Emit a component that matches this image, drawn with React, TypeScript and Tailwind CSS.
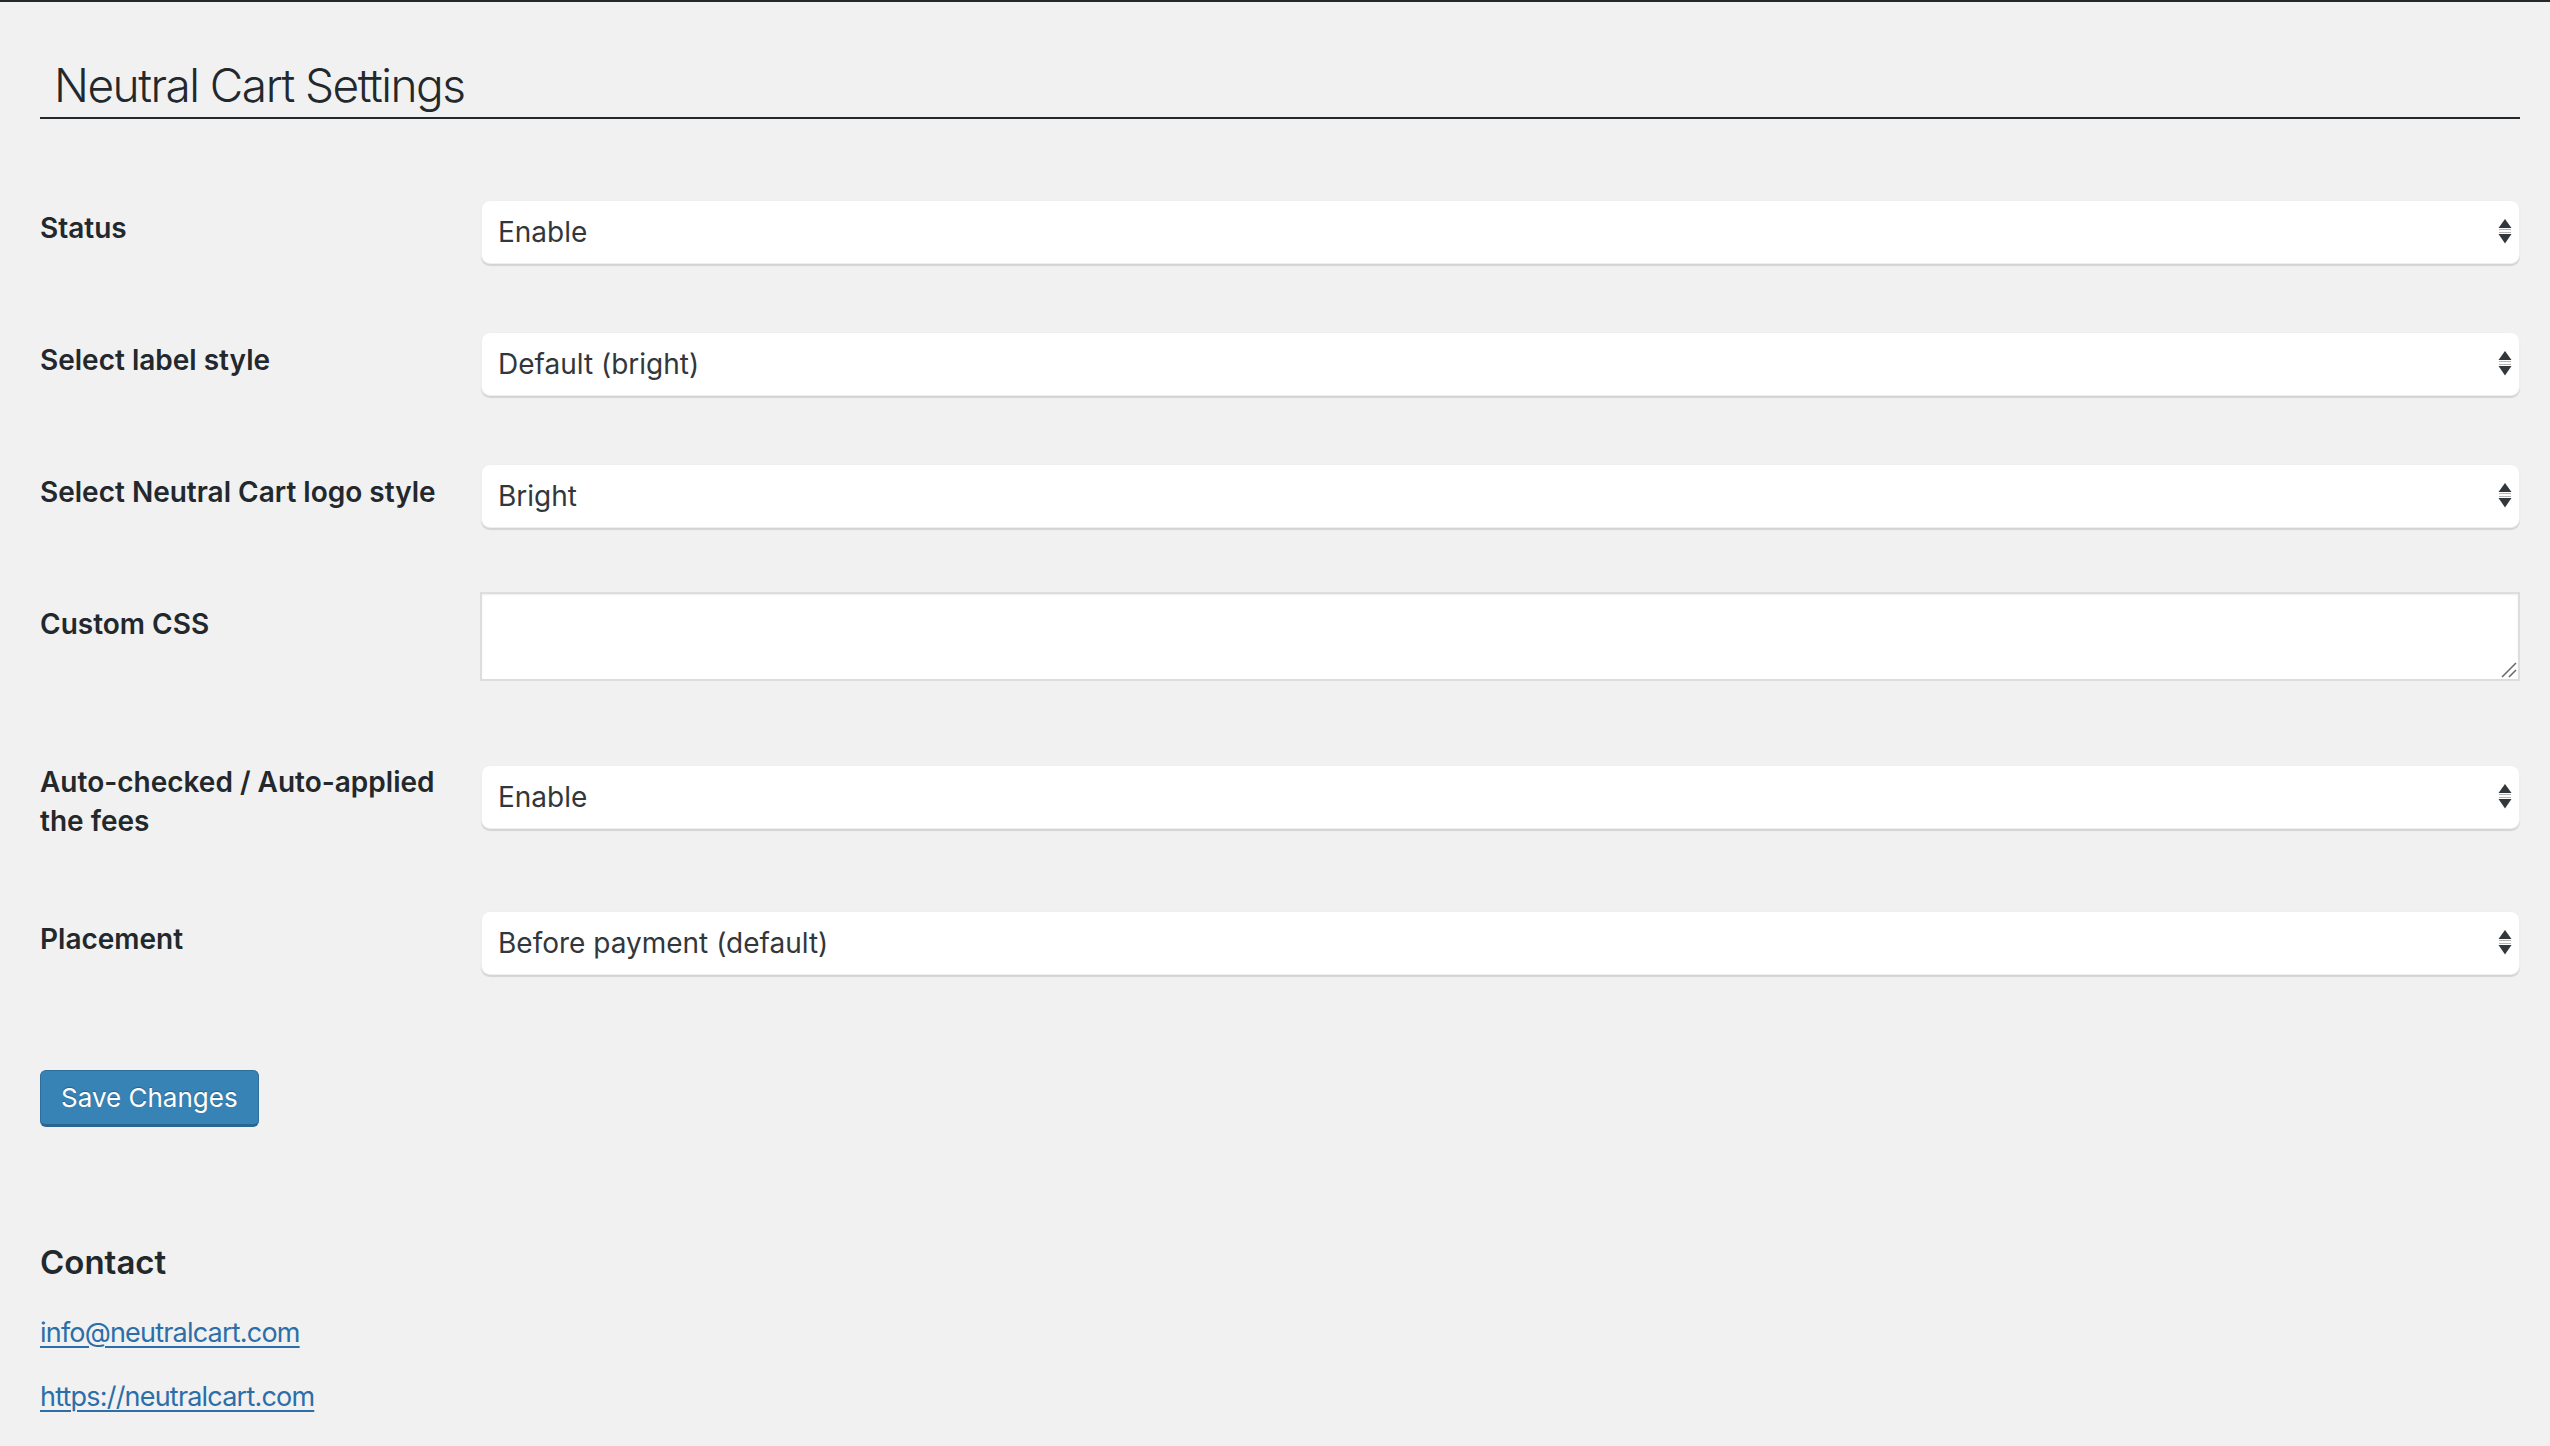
import React from 'react';

const font = { fontFamily: 'Inter, "Noto Sans", "Liberation Sans", sans-serif' };

interface SelectRowProps {
  label: string;
  value: string;
  fieldPad?: string;
  bottomPad?: string;
}

const SelectArrows: React.FC = () => (
  <svg
    className="pointer-events-none absolute right-[8px] top-1/2 -translate-y-1/2"
    width="14"
    height="26"
    viewBox="0 0 14 26"
  >
    <polygon points="7,0 13.5,9 0.5,9" fill="#32373c" />
    <rect x="1" y="10" width="12" height="1" fill="#b5b5b5" />
    <rect x="1" y="13" width="12" height="1" fill="#b5b5b5" />
    <polygon points="0.5,15 13.5,15 7,24.5" fill="#32373c" />
  </svg>
);

const FakeSelect: React.FC<{ value: string }> = ({ value }) => (
  <div className="relative w-full">
    <select
      defaultValue={value}
      className="block h-[64px] w-full appearance-none rounded-[9px] border border-[#efefef] bg-white pl-[16px] pr-[40px] text-[28px] text-[#32373c] shadow-[0_2px_1px_rgba(0,0,0,0.12)] outline-none"
      style={font}
    >
      <option>{value}</option>
    </select>
    <SelectArrows />
  </div>
);

const SelectRow: React.FC<SelectRowProps> = ({
  label,
  value,
  fieldPad = 'pt-[30px]',
  bottomPad = 'pb-[38px]'
}) => (
  <div className="flex items-start">
    <div className="w-[400px] mr-[41px] shrink-0 pt-[39px] text-[28px] font-semibold leading-[38.5px] text-[#23282d]">
      {label}
    </div>
    <div className={`flex-1 ${fieldPad} ${bottomPad}`}>
      <FakeSelect value={value} />
    </div>
  </div>
);

const App: React.FC = () => {
  return (
    <div className="min-h-[1446px] w-full border-t-2 border-[#23282d] bg-[#f1f1f1]" style={font}>
      <div className="pl-[40px] pr-[30px]">
        {/* Title */}
        <h1 className="mt-[53px] border-b-2 border-[#23282d] pb-[2px] pl-[14px] text-[46px] font-light leading-[60px] tracking-[-1.5px] text-[#23282d]">
          Neutral Cart Settings
        </h1>

        {/* Settings table */}
        <div className="mt-[51px]">
          <SelectRow label="Status" value="Enable" />
          <SelectRow label="Select label style" value="Default (bright)" />
          <SelectRow label="Select Neutral Cart logo style" value="Bright" />

          <div className="flex items-start">
            <div className="w-[400px] mr-[41px] shrink-0 pt-[39px] text-[28px] font-semibold leading-[38.5px] text-[#23282d]">
              Custom CSS
            </div>
            <div className="flex-1 pt-[26px] pb-[43px]">
              <div className="relative -ml-px">
                <textarea
                  className="block h-[89px] w-full resize-none border-2 border-[#dddddd] bg-white shadow-[inset_0_1px_2px_rgba(0,0,0,0.07)] outline-none"
                />
                <svg
                  className="pointer-events-none absolute bottom-[3px] right-[3px]"
                  width="16"
                  height="16"
                  viewBox="0 0 16 16"
                >
                  <line x1="1" y1="15" x2="15" y2="1" stroke="#6b6b6b" strokeWidth="1.6" />
                  <line x1="8" y1="15" x2="15" y2="8" stroke="#6b6b6b" strokeWidth="1.6" />
                </svg>
              </div>
            </div>
          </div>

          <SelectRow
            label="Auto-checked / Auto-applied the fees"
            value="Enable"
            fieldPad="pt-[41px]"
            bottomPad="pb-[52px]"
          />
          <SelectRow label="Placement" value="Before payment (default)" />
        </div>

        {/* Submit */}
        <div className="mt-[57px]">
          <button
            type="button"
            className="h-[57px] rounded-[6px] border border-[#2f6d9a] border-b-[3px] border-b-[#2b6592] bg-[#3883b6] px-[20px] text-[26px] text-white [text-shadow:0_-1px_1px_#285f8a]"
            style={font}
          >
            Save Changes
          </button>
        </div>

        {/* Contact */}
        <h2 className="mt-[112px] text-[33px] font-semibold leading-[46px] text-[#23282d]">Contact</h2>
        <div className="mt-[30px] text-[27px] leading-[36px] tracking-[-0.8px]">
          <a href="#" className="text-[#2b6ea8] underline decoration-[2px] underline-offset-[4px]">
            info@neutralcart.com
          </a>
        </div>
        <div className="mt-[28px] text-[27px] leading-[36px] tracking-[-0.8px]">
          <a href="#" className="text-[#2b6ea8] underline decoration-[2px] underline-offset-[4px]">
            https://neutralcart.com
          </a>
        </div>
      </div>
    </div>
  );
};

export default App;
